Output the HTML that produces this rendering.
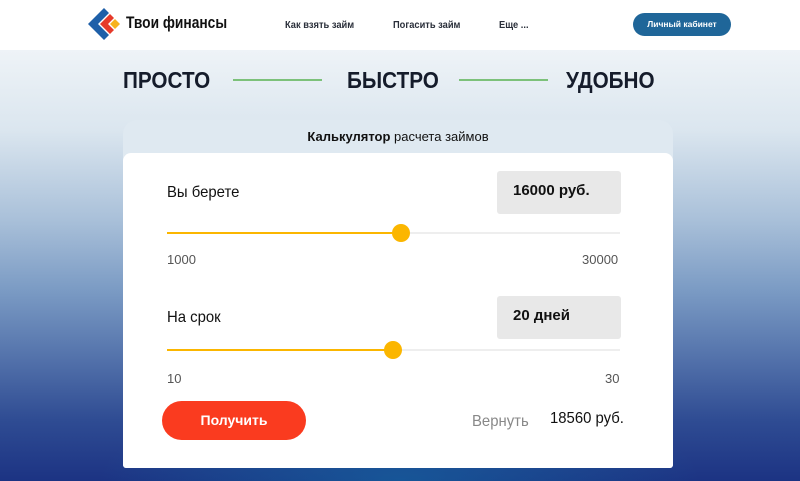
<!DOCTYPE html>
<html><head><meta charset="utf-8"><style>
*{margin:0;padding:0;box-sizing:border-box}
body{width:800px;height:481px;overflow:hidden;font-family:"Liberation Sans","DejaVu Sans",sans-serif;position:relative;
background:linear-gradient(180deg,#eef3f7 50px,#dbe6ef 130px,#a9c0d9 220px,#7b9bc4 290px,#5877ae 350px,#2f4c93 420px,#1c3383 481px);}
.bg2{position:absolute;left:0;top:380px;width:800px;height:101px;background:radial-gradient(ellipse 300px 90px at 400px 101px,rgba(20,100,160,.7),rgba(20,100,160,0));}
.nav{position:absolute;left:0;top:0;width:800px;height:50px;background:#fff}
.abs{position:absolute;white-space:nowrap;transform-origin:0 0}
.nl{font-size:10px;font-weight:bold;color:#2a2f3a;top:20px;transform:scaleX(.93)}
.big{font-size:23px;font-weight:bold;color:#151c2b;top:67px;transform:scaleX(.9)}
.gl{position:absolute;height:2px;background:#7cc17a;top:79px}
.card{position:absolute;left:123px;top:120px;width:550px;height:348px;border-radius:14px 14px 3px 3px;background:#dfe9f1;overflow:hidden}
.body{position:absolute;left:0;top:33px;width:550px;height:315px;background:#fff;border-radius:8px 8px 3px 3px}
.box{position:absolute;left:374px;width:124px;height:43px;background:#e8e8e8;border-radius:3px;font-size:15px;font-weight:bold;color:#111;padding:11px 0 0 16px}
.lbl{font-size:16px;color:#111;transform:scaleX(.93)}
.track{position:absolute;left:44px;width:453px;height:2px;background:#eeeeee}
.fill{position:absolute;left:0;top:0;height:2px;background:#fbb600}
.th{position:absolute;width:18px;height:18px;border-radius:50%;background:#fbb600;top:-8px}
.num{font-size:13px;color:#555}
</style></head><body>
<div class="bg2"></div>
<div class="nav">
<svg class="abs" style="left:87px;top:6px" width="36" height="36" viewBox="0 0 36 34">
<path d="M17 1 L1 17 L17 33 L22 28 L11 17 L22 6 Z" fill="#1e5fa8"/>
<path d="M23 7 L13 17 L23 27 L27 23 L21 17 L27 11 Z" fill="#e63a2a"/>
<path d="M28 12 L23 17 L28 22 L33 17 Z" fill="#f7b21c"/>
</svg>
<div class="abs" style="left:126px;top:13px;font-size:17px;font-weight:bold;color:#111;transform:scaleX(.81)">Твои финансы</div>
<div class="abs nl" style="left:285px">Как взять займ</div>
<div class="abs nl" style="left:393px">Погасить займ</div>
<div class="abs nl" style="left:499px">Еще ...</div>
<div class="abs" style="left:633px;top:13px;width:98px;height:23px;border-radius:12px;background:#1f6699;color:#fff;font-size:8.5px;font-weight:bold;text-align:center;line-height:23px">Личный кабинет</div>
</div>
<div class="abs big" style="left:123px">ПРОСТО</div>
<div class="gl" style="left:233px;width:89px"></div>
<div class="abs big" style="left:347px">БЫСТРО</div>
<div class="gl" style="left:459px;width:89px"></div>
<div class="abs big" style="left:566px">УДОБНО</div>
<div class="card">
<div class="abs" style="left:0;width:550px;text-align:center;top:9px;font-size:13px;color:#111"><b>Калькулятор</b> расчета займов</div>
<div class="body">
<div class="abs lbl" style="left:44px;top:31px">Вы берете</div>
<div class="box" style="top:18px">16000 руб.</div>
<div class="track" style="top:79px"><div class="fill" style="width:234px"></div><div class="th" style="left:225px"></div></div>
<div class="abs num" style="left:44px;top:99px">1000</div>
<div class="abs num" style="left:459px;top:99px">30000</div>
<div class="abs lbl" style="left:44px;top:156px">На срок</div>
<div class="box" style="top:143px">20 дней</div>
<div class="track" style="top:196px"><div class="fill" style="width:226px"></div><div class="th" style="left:217px"></div></div>
<div class="abs num" style="left:44px;top:218px">10</div>
<div class="abs num" style="left:482px;top:218px">30</div>
<div class="abs" style="left:39px;top:248px;width:144px;height:39px;border-radius:20px;background:#fa3b1f;color:#fff;font-weight:bold;font-size:14px;text-align:center;line-height:39px">Получить</div>
<div class="abs" style="left:349px;top:260px;font-size:16px;color:#888;transform:scaleX(.93)">Вернуть</div>
<div class="abs" style="left:427px;top:257px;font-size:16px;color:#111;transform:scaleX(.93)">18560 руб.</div>
</div></div>
</body></html>
